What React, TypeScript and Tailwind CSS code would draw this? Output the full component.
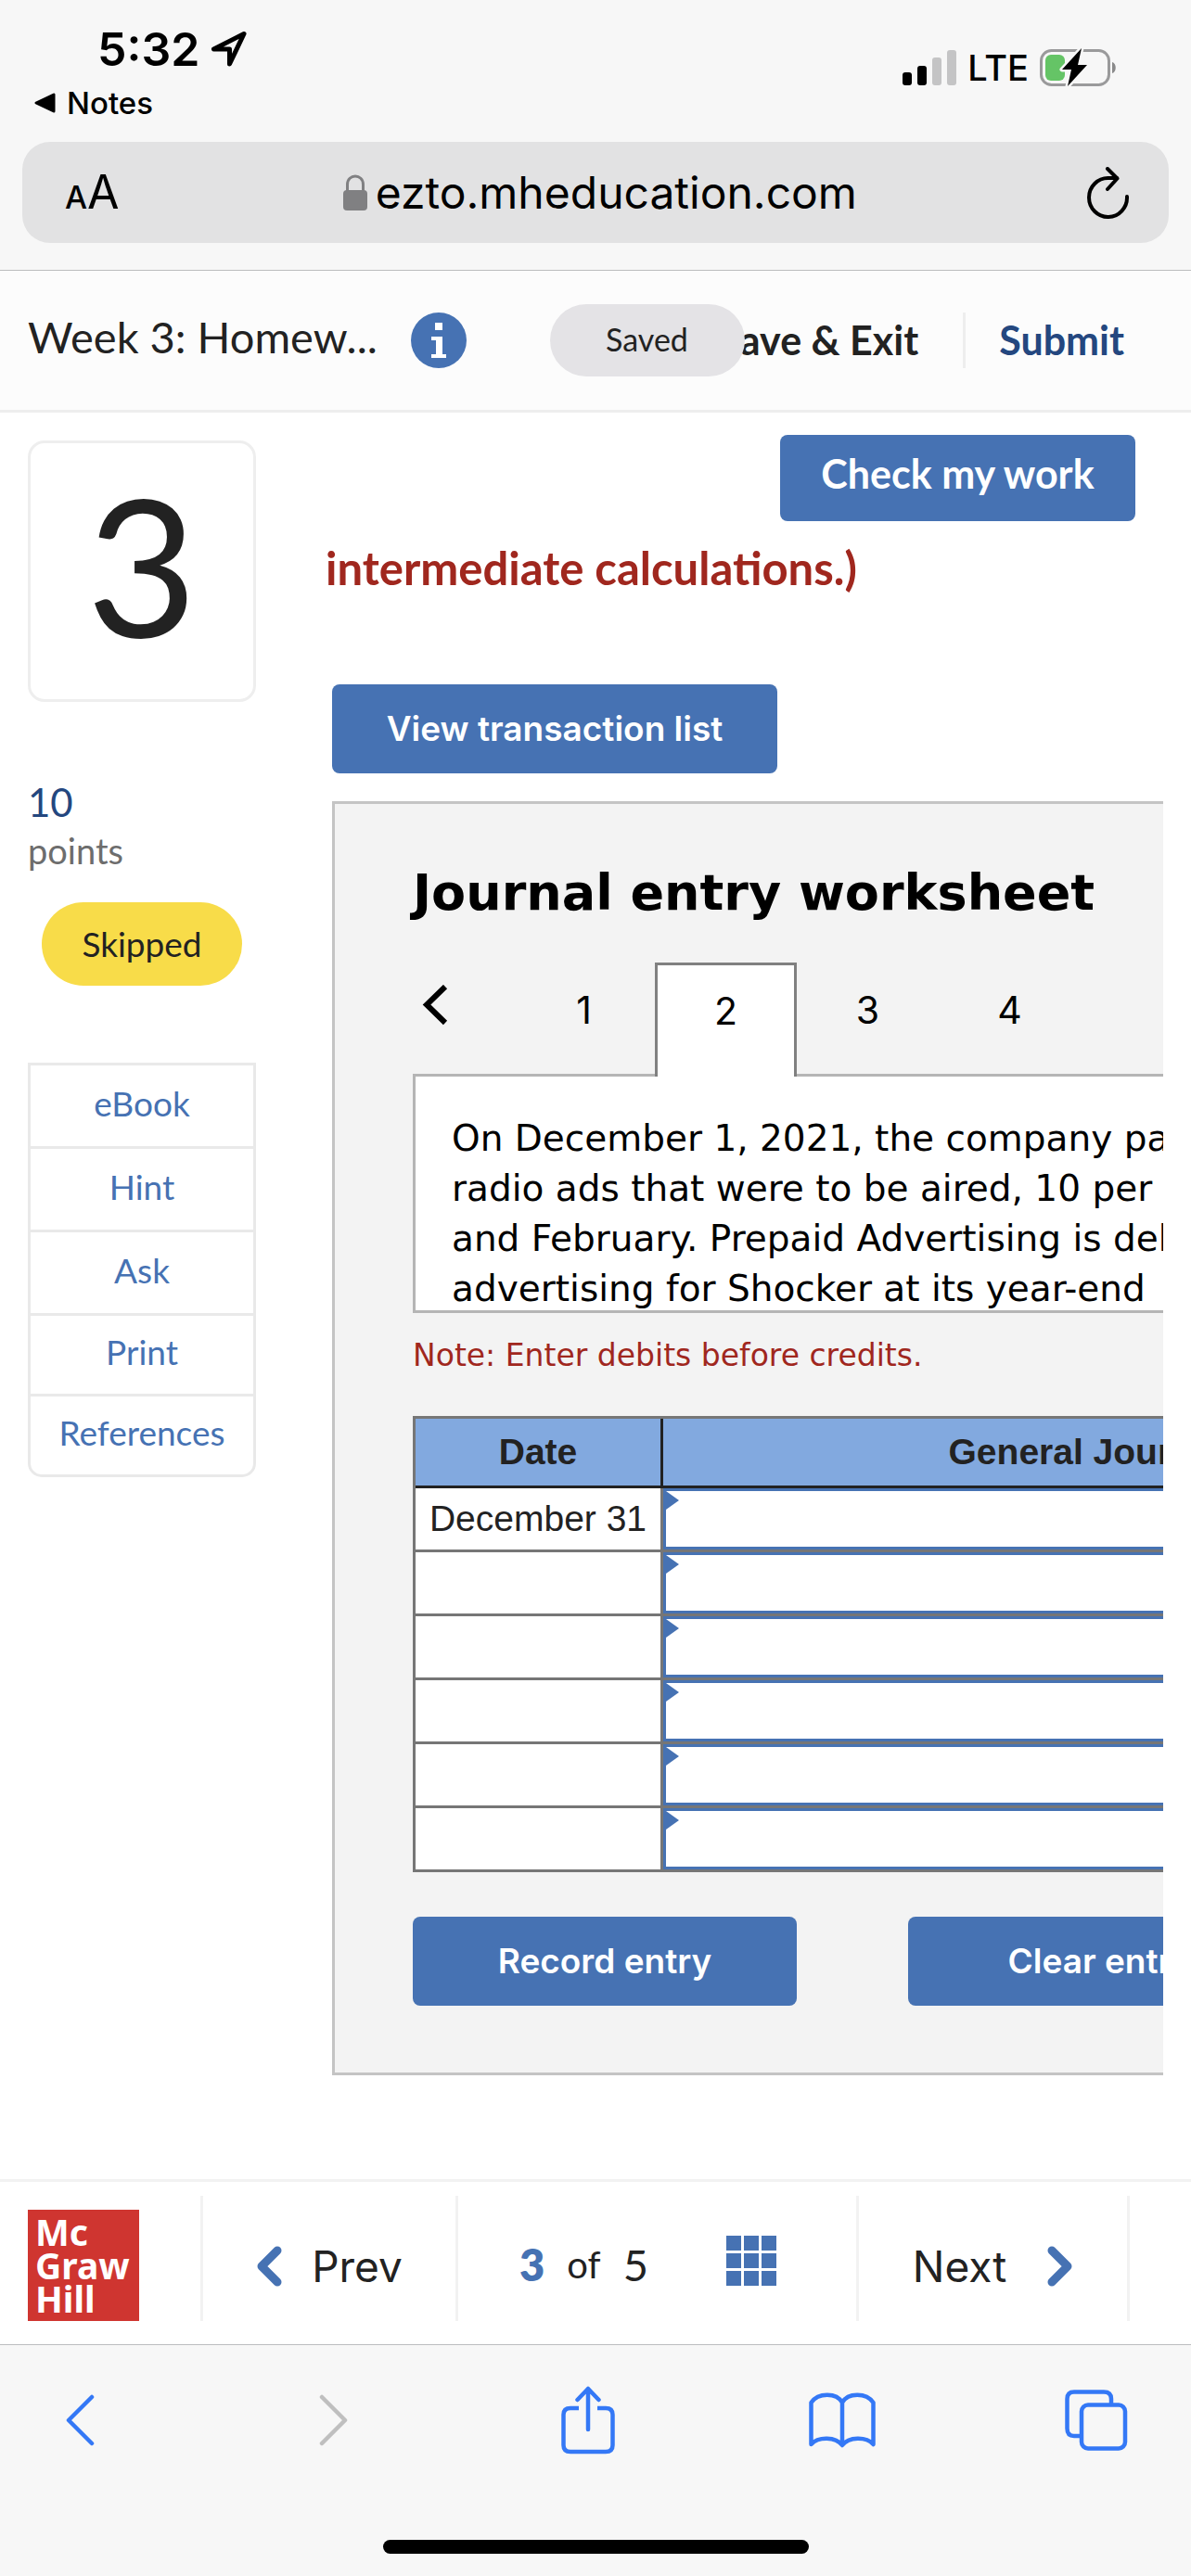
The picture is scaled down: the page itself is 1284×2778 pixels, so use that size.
import type { ReactNode } from "react";

const RESOURCES = [
  { name: "eBook", height: "h-[90px]" },
  { name: "Hint", height: "h-[90px]" },
  { name: "Ask", height: "h-[90px]" },
  { name: "Print", height: "h-[87px]" },
  { name: "References", height: "h-[84px]" },
];
const TABS = [1, 2, 3, 4];
const ROWS = ["December 31", "", "", "", "", ""];

function LocationIcon() {
  return (
    <svg width="40" height="40" viewBox="0 0 40 40" fill="none">
      <path
        d="M36 3.500L3.500 20H20.500V36Z"
        stroke="black"
        strokeWidth="5"
        strokeLinejoin="round"
      />
    </svg>
  );
}

function SignalIcon() {
  return (
    <svg width="58" height="38" viewBox="0 0 58 38">
      <rect x="0" y="24" width="10" height="14" rx="3" fill="black" />
      <rect x="16" y="17" width="10" height="21" rx="3" fill="black" />
      <rect x="32" y="8" width="10" height="30" rx="3" fill="#c4c4c5" />
      <rect x="48" y="0" width="10" height="38" rx="3" fill="#c4c4c5" />
    </svg>
  );
}

function BatteryIcon() {
  return (
    <svg width="83" height="42" viewBox="0 0 83 42">
      <rect
        x="1.5"
        y="2.5"
        width="73"
        height="37"
        rx="11"
        fill="none"
        stroke="#9a9a9b"
        strokeWidth="3"
      />
      <rect x="6" y="7" width="21" height="28" rx="6" fill="#65c466" />
      <path d="M78 15c5 1 5 11 0 12z" fill="#8a8a8b" />
      <path
        d="M45 0 L24 23 H34 L30 41 L51 18 H41 Z"
        fill="black"
        stroke="#f7f7f7"
        strokeWidth="5"
        strokeLinejoin="round"
        paintOrder="stroke"
      />
    </svg>
  );
}

function LockIcon() {
  return (
    <svg width="28" height="40" viewBox="0 0 28 40">
      <path
        d="M5.5 18V11C5.5 -1 22.5 -1 22.5 11V18"
        fill="none"
        stroke="#808082"
        strokeWidth="3"
      />
      <rect x="1" y="17" width="26" height="22" rx="4" fill="#808082" />
    </svg>
  );
}

function ReloadIcon() {
  return (
    <svg
      width="46"
      height="56"
      viewBox="0 0 46 56"
      fill="none"
      stroke="black"
      strokeWidth="4"
      strokeLinecap="round"
      strokeLinejoin="round"
    >
      <path d="M43 32 A20.5 21 0 1 1 23 12 H32" />
      <path d="M22 2 L32.500 12.500 L22 24" />
    </svg>
  );
}

function Chevron({ d }: { d: string }) {
  return (
    <svg width="32" height="56" viewBox="0 0 32 56" fill="none">
      <path
        d={d}
        stroke="currentColor"
        strokeWidth="4.500"
        strokeLinecap="round"
        strokeLinejoin="round"
      />
    </svg>
  );
}

function BoldChevron({ d }: { d: string }) {
  return (
    <svg width="28" height="44" viewBox="0 0 28 44" fill="none">
      <path
        d={d}
        stroke="#4672b3"
        strokeWidth="9"
        strokeLinecap="round"
        strokeLinejoin="round"
      />
    </svg>
  );
}

function GridIcon() {
  return (
    <svg width="54" height="54" viewBox="0 0 54 54" fill="#4672b3">
      {[0, 19, 38].map((y) =>
        [0, 19, 38].map((x) => (
          <rect key={`${x}-${y}`} x={x} y={y} width="16" height="16" />
        )),
      )}
    </svg>
  );
}

function ShareIcon() {
  return (
    <svg
      width="58"
      height="74"
      viewBox="0 0 58 74"
      fill="none"
      stroke="currentColor"
      strokeWidth="4.500"
      strokeLinejoin="round"
    >
      <path d="M19 24H10Q2.500 24 2.500 31V64Q2.500 71 10 71H48Q55.500 71 55.500 64V31Q55.500 24 48 24H39" />
      <path d="M29 47V3M17.500 15L29 3L40.500 15" strokeLinecap="round" />
    </svg>
  );
}

function BookIcon() {
  return (
    <svg
      width="72"
      height="60"
      viewBox="0 0 72 60"
      fill="none"
      stroke="currentColor"
      strokeWidth="4.500"
      strokeLinejoin="round"
    >
      <path d="M36 11C30 0 10 0 2.500 11V56C10 47.500 29 47.500 36 57C43 47.500 62 47.500 69.500 56V11C62 0 42 0 36 11ZM36 11V57" />
    </svg>
  );
}

function WindowsIcon() {
  return (
    <svg
      width="68"
      height="68"
      viewBox="0 0 68 68"
      fill="none"
      stroke="currentColor"
      strokeWidth="4.500"
    >
      <path d="M16 51H10Q2.500 51 2.500 43V11Q2.500 3.500 10 3.500H42Q50 3.500 50 11V17" />
      <rect x="18" y="17.500" width="47" height="47" rx="7" />
    </svg>
  );
}

function PrimaryButton({
  className,
  children,
}: {
  className: string;
  children: ReactNode;
}) {
  return (
    <button
      type="button"
      className={`shrink-0 rounded-lg bg-[#4672b3] text-white ${className}`}
    >
      {children}
    </button>
  );
}

function BrowserTop() {
  return (
    <div className="border-b border-[#bcbdbf] bg-[#f7f7f7] px-6 pb-[29px]">
      <div className="flex h-[153px] justify-between pl-3 pr-14">
        <div>
          <div className="flex items-center gap-3 pl-[69px] pt-[23px] text-[50px] leading-[60px] font-semibold">
            5:32
            <LocationIcon />
          </div>
          <a
            href="#notes"
            className="mt-2 flex items-center gap-3 text-[33px] leading-10 font-medium"
          >
            <svg width="24" height="24" viewBox="0 0 24 24">
              <path
                d="M3 12L22 3V21Z"
                stroke="black"
                strokeWidth="3"
                strokeLinejoin="round"
              />
            </svg>
            Notes
          </a>
        </div>
        <div className="flex items-center gap-3 self-start pt-[49px] text-[38px] leading-[48px] font-medium">
          <SignalIcon />
          LTE
          <BatteryIcon />
        </div>
      </div>
      <div className="flex h-[109px] items-center justify-between rounded-[30px] bg-[#e2e2e3] pl-[46px] pr-[42px]">
        <button type="button" className="flex items-baseline">
          <span className="text-[34px] font-medium">A</span>
          <span className="text-[50px]">A</span>
        </button>
        <div className="flex items-center gap-2 pr-2 text-[48px]">
          <LockIcon />
          ezto.mheducation.com
        </div>
        <button type="button" aria-label="Reload">
          <ReloadIcon />
        </button>
      </div>
    </div>
  );
}

function AssignmentHeader() {
  return (
    <header className="flex h-[153px] items-center border-b-3 border-[#eeeeee] bg-[#fcfcfc] pl-[30px] pr-[72px] font-[Lato,sans-serif] text-[#222222]">
      <h1 className="pb-2 text-[47px]">Week 3: Homew...</h1>
      <button type="button" aria-label="Assignment information" className="ml-9">
        <svg width="60" height="60" viewBox="0 0 60 60">
          <circle cx="30" cy="30" r="30" fill="#4672b3" />
          <path
            d="M26 11h8v8h-8zM22 26h12v19h4v4H22v-4h5V30h-5z"
            fill="white"
          />
        </svg>
      </button>
      <span className="z-10 -mr-7 ml-auto flex h-[78px] w-[210px] items-center justify-center rounded-full bg-[#e4e3e6] pb-1 text-[34px]">
        Saved
      </span>
      <button type="button" className="text-[43px] font-bold">
        Save &amp; Exit
      </button>
      <span className="mr-9 ml-12 h-[60px] w-[3px] bg-[#eeeeee]" />
      <button type="button" className="text-[43px] font-bold text-[#24477f]">
        Submit
      </button>
    </header>
  );
}

function Sidebar() {
  return (
    <aside className="w-[246px] shrink-0 pt-[30px] font-[Lato,sans-serif]">
      <div className="flex h-[282px] items-center justify-center rounded-[18px] border-3 border-[#eeeeee] pb-4 text-[206px] leading-none text-[#222222]">
        3
      </div>
      <p className="mt-[78px] text-[42px] leading-[60px] text-[#24477f]">10</p>
      <p className="text-[38px] leading-11 text-[#6d6d6d]">points</p>
      <div className="mx-auto mt-[34px] flex h-[90px] w-[216px] items-center justify-center rounded-full bg-[#f8dc49] text-[37px] text-[#222222]">
        Skipped
      </div>
      <nav className="mt-[83px] divide-y-3 divide-[#e9e9e9] rounded-b-[15px] border-3 border-[#e9e9e9] text-[37px] text-[#4672b3]">
        {RESOURCES.map(({ name, height }) => (
          <a
            key={name}
            href={`#${name.toLowerCase()}`}
            className={`flex items-center justify-center pb-1.5 ${height}`}
          >
            {name}
          </a>
        ))}
      </nav>
    </aside>
  );
}

function JournalTable() {
  return (
    <table className="mt-[33px] w-[1185px] table-fixed border-separate border-spacing-0 border-t-3 border-l-3 border-[#767676] bg-white font-['Liberation_Sans',sans-serif] text-[39px] text-[#222222]">
      <thead>
        <tr className="h-[75px] bg-[#82a9df]">
          <th className="w-[267px] border-r-3 border-b-3 border-[#222222]">
            Date
          </th>
          <th className="border-r-3 border-b-3 border-[#222222]">
            General Journal
          </th>
        </tr>
      </thead>
      <tbody>
        {ROWS.map((date, i) => (
          <tr key={i} className="h-[69px]">
            <td className="border-r-3 border-b-3 border-[#767676] p-0 text-center leading-[66px]">
              {date}
            </td>
            <td className="relative border-r-3 border-b-3 border-[#767676] p-0">
              <input
                aria-label={`General Journal row ${i + 1}`}
                className="block h-[66px] w-full border-3 border-[#4672b3] px-6"
              />
              <svg
                className="absolute top-[3px] left-[3px]"
                width="14"
                height="20"
                viewBox="0 0 14 20"
              >
                <path d="M0 0L14 10L0 20Z" fill="#4672b3" />
              </svg>
            </td>
          </tr>
        ))}
      </tbody>
    </table>
  );
}

function Worksheet() {
  return (
    <section className="mt-[30px] ml-[7px] overflow-hidden border-y-3 border-l-3 border-[#c4c4c4] bg-[#f3f3f3] pt-16 pb-[72px] pl-[84px] font-['DejaVu_Sans',sans-serif]">
      <h2 className="text-[54px] leading-[64px] font-bold whitespace-nowrap">
        Journal entry worksheet
      </h2>
      <div className="mt-[43px] flex font-[Inter,sans-serif] text-[41px]">
        <button
          type="button"
          aria-label="Previous entry"
          className="flex w-[108px] items-center pb-7 pl-2.5"
        >
          <svg width="28" height="44" viewBox="0 0 28 44" fill="none">
            <path d="M25 2L5 21.500L25 41" stroke="black" strokeWidth="6" />
          </svg>
        </button>
        {TABS.map((tab) => (
          <button
            key={tab}
            type="button"
            className={
              tab === 2
                ? "relative z-10 -mb-[3px] h-[123px] w-[153px] border-x-3 border-t-3 border-[#808080] bg-white pb-5"
                : "h-[120px] w-[153px] pb-4"
            }
          >
            {tab}
          </button>
        ))}
      </div>
      <div className="h-[258px] w-[1185px] overflow-hidden border-3 border-[#b5b5b5] bg-white pt-10 pl-[39px] text-[39px] leading-[54px] whitespace-nowrap">
        On December 1, 2021, the company paid
        <br />
        radio ads that were to be aired, 10 per
        <br />
        and February. Prepaid Advertising is debited
        <br />
        advertising for Shocker at its year-end
      </div>
      <p className="mt-[16px] mb-[35px] text-[33px] leading-[60px] text-[#a0271e]">
        Note: Enter debits before credits.
      </p>
      <JournalTable />
      <div className="mt-12 flex gap-[120px] font-[Inter,sans-serif]">
        <PrimaryButton className="h-24 w-[414px] text-[37px] font-semibold">
          Record entry
        </PrimaryButton>
        <PrimaryButton className="h-24 w-[414px] text-[37px] font-semibold">
          Clear entry
        </PrimaryButton>
      </div>
    </section>
  );
}

function Divider() {
  return <span className="mt-[15px] h-[135px] w-[3px] bg-[#f2f2f2]" />;
}

function QuestionNav() {
  return (
    <footer className="flex h-[178px] border-t-3 border-[#f2f2f2] bg-white pl-[30px] text-[#222222]">
      <div className="mt-[30px] h-[120px] w-[120px] bg-[#cf3530] pt-1.5 pl-2 font-['Noto_Sans',sans-serif] text-[39px] leading-[36px] font-bold text-white">
        Mc
        <br />
        Graw
        <br />
        Hill
      </div>
      <div className="w-[66px]" />
      <Divider />
      <button
        type="button"
        className="flex h-[182px] flex-[272] items-center justify-center gap-8 text-[46px]"
      >
        <BoldChevron d="M23 5L6 22L23 39" />
        Prev
      </button>
      <Divider />
      <div className="flex h-[178px] flex-[429] items-center justify-center font-[Lato,sans-serif]">
        <span className="text-[47px] font-extrabold text-[#4672b3]">3</span>
        <span className="mx-6 text-[40px]">of</span>
        <span className="text-[47px]">5</span>
        <button
          type="button"
          aria-label="Question list"
          className="mr-5 mb-2 ml-[84px]"
        >
          <GridIcon />
        </button>
      </div>
      <Divider />
      <button
        type="button"
        className="flex h-[182px] flex-[289] items-center justify-center gap-11 text-[46px]"
      >
        Next
        <BoldChevron d="M5 5L22 22L5 39" />
      </button>
      <Divider />
      <div className="w-[66px]" />
    </footer>
  );
}

function ToolbarButton({
  label,
  disabled,
  children,
}: {
  label: string;
  disabled?: boolean;
  children: ReactNode;
}) {
  return (
    <button
      type="button"
      aria-label={label}
      disabled={disabled}
      className="flex w-[72px] justify-center disabled:text-[#bfbfbf]"
    >
      {children}
    </button>
  );
}

function BrowserToolbar() {
  return (
    <div className="border-t border-[#bcbdbf] bg-[#f7f7f7] pb-6 text-[#3478f6]">
      <div className="flex h-[162px] items-center justify-between pr-[66px] pl-[50px]">
        <ToolbarButton label="Back">
          <Chevron d="M29 3L4 28L29 53" />
        </ToolbarButton>
        <ToolbarButton label="Forward" disabled>
          <Chevron d="M3 3L28 28L3 53" />
        </ToolbarButton>
        <ToolbarButton label="Share">
          <ShareIcon />
        </ToolbarButton>
        <ToolbarButton label="Bookmarks">
          <BookIcon />
        </ToolbarButton>
        <ToolbarButton label="Tabs">
          <WindowsIcon />
        </ToolbarButton>
      </div>
      <div className="mx-auto mt-12 h-[15px] w-[459px] rounded-full bg-black" />
    </div>
  );
}

export default function App() {
  return (
    <div className="flex min-h-screen flex-col overflow-x-hidden bg-white font-[Inter,sans-serif] text-black">
      <BrowserTop />
      <AssignmentHeader />
      <main className="flex flex-1 gap-[75px] px-[30px]">
        <Sidebar />
        <div className="min-w-0 flex-1 pt-6">
          <div className="flex justify-end pr-[30px]">
            <PrimaryButton className="h-[93px] w-[383px] pb-2 font-[Lato,sans-serif] text-[43px] font-bold">
              Check my work
            </PrimaryButton>
          </div>
          <p className="mt-5 font-[Lato,sans-serif] text-[49px] leading-[60px] font-bold text-[#a0271e]">
            intermediate calculations.)
          </p>
          <PrimaryButton className="mt-24 ml-[7px] h-24 w-[480px] text-[37px] font-semibold">
            View transaction list
          </PrimaryButton>
          <Worksheet />
        </div>
      </main>
      <QuestionNav />
      <BrowserToolbar />
    </div>
  );
}
